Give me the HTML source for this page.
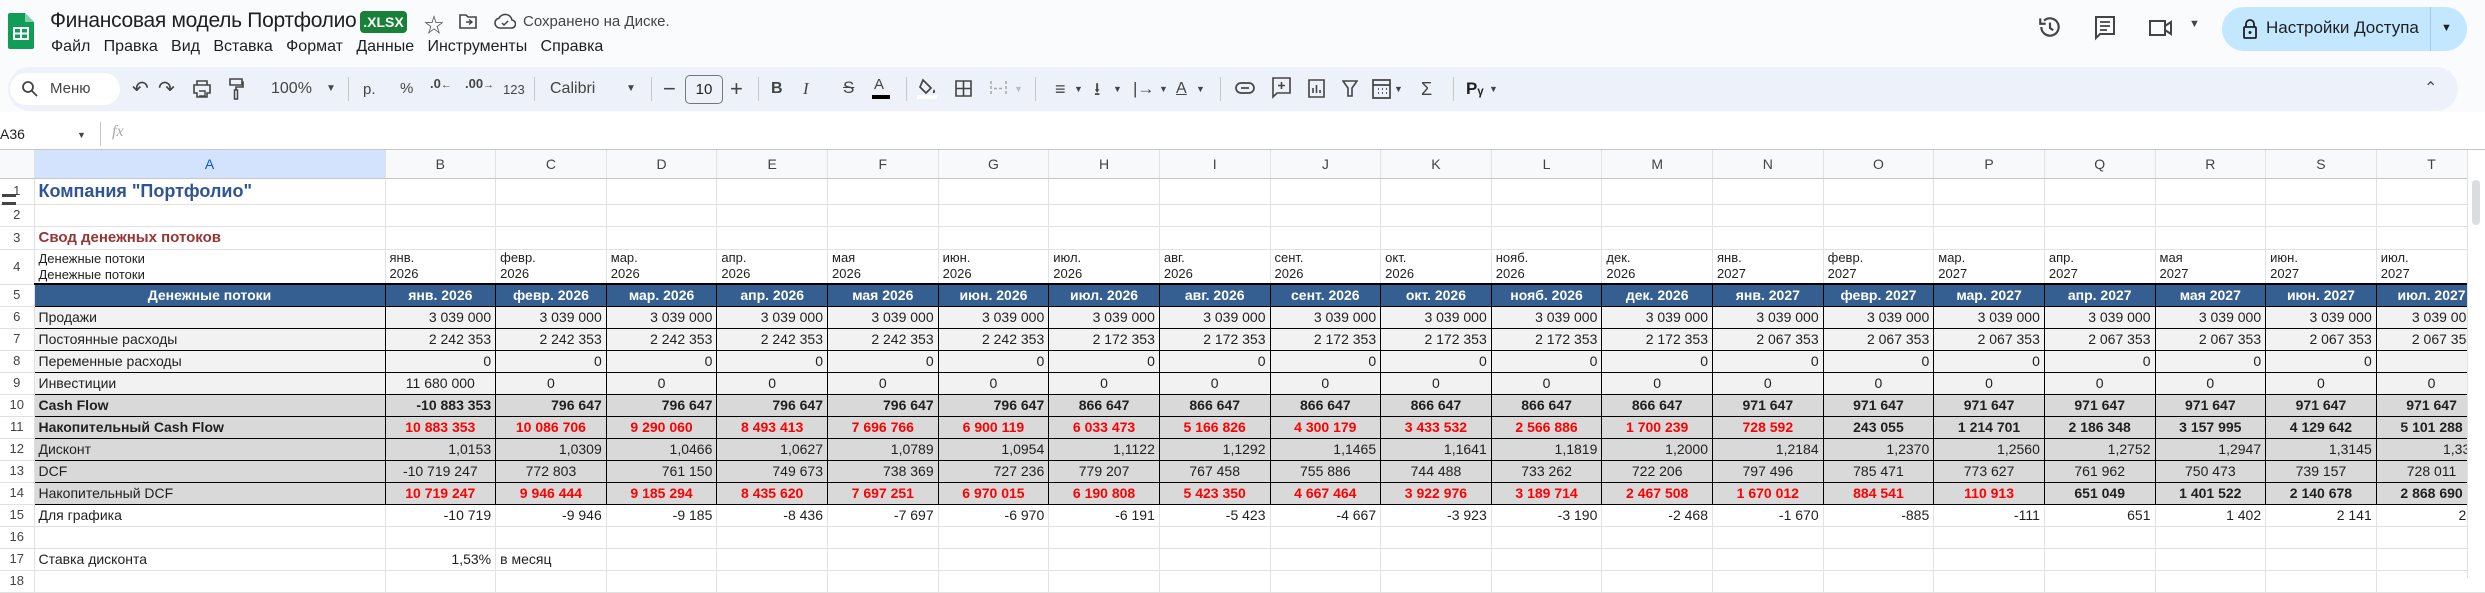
<!DOCTYPE html>
<html><head><meta charset="utf-8"><style>
*{box-sizing:border-box;margin:0;padding:0}
body{width:2485px;height:578px;overflow:hidden;background:#f9fbfd;font-family:"Liberation Sans","Noto Sans CJK SC",sans-serif;color:#1f1f1f;position:relative}
.a{position:absolute;white-space:nowrap}
.ic{position:absolute;color:#444;font-size:20px;line-height:20px;top:79px}
.sep{position:absolute;top:77px;width:1px;height:24px;background:#c7c7c7}
table{position:absolute;left:0;top:150px;border-collapse:collapse;table-layout:fixed;background:#fff;font-size:14px}
td{border-right:1px solid #e1e1e1;border-bottom:1px solid #e1e1e1;height:22px;padding:0 4px;white-space:nowrap;overflow:hidden;line-height:20px}
tr.h td{background:#f8f9fa;text-align:center;color:#444;height:28px;font-size:14px;border-bottom:1px solid #c4c7c5}
td.rh{text-align:center;color:#444;font-size:13px;padding:0;background:#fff}
.k{border:1px solid #000}
.r{text-align:right}.c{text-align:center}
.l1 td.k{background:#f2f2f2}
.l2 td.k{background:#d9d9d9}
.hd td.k{background:#355f91;color:#fff;font-weight:bold;text-align:center;border-top:2px solid #000}
.b{font-weight:bold}.red{color:#f00;font-weight:bold}
</style></head><body>
<!-- header -->
<svg class="a" style="left:8px;top:13px" width="26" height="36" viewBox="0 0 26 36"><path d="M2 0h15l9 9v25a2 2 0 0 1-2 2H2a2 2 0 0 1-2-2V2a2 2 0 0 1 2-2z" fill="#0f9d58"/><path d="M17 0v9h9z" fill="#87ceac"/><rect x="6" y="15" width="14" height="11" fill="none" stroke="#fff" stroke-width="2"/><path d="M6 20.5h14M13 15v11" stroke="#fff" stroke-width="2"/></svg>
<div class="a" style="left:50px;top:9px;font-size:21px;letter-spacing:-0.3px;color:#1f1f1f">Финансовая модель Портфолио</div>
<div class="a" style="left:360px;top:11px;width:47px;height:22px;background:#188038;color:#fff;border-radius:4px;font-size:14px;font-weight:bold;text-align:center;line-height:22px">.XLSX</div>
<div class="a" style="left:424px;top:9px;font-size:20px;color:#444">☆</div>
<svg class="a" style="left:459px;top:13px" width="18" height="16" viewBox="0 0 18 16"><path d="M1 2h6l2 2h8v11H1z" fill="none" stroke="#444" stroke-width="1.6"/><path d="M7 9h6M10 6.5l3 2.5-3 2.5" stroke="#444" stroke-width="1.4" fill="none"/></svg>
<svg class="a" style="left:494px;top:13px" width="22" height="16" viewBox="0 0 22 16"><path d="M6 15a5 5 0 0 1-1-9.9A7 7 0 0 1 18 7a4 4 0 0 1-1 8z" fill="none" stroke="#444" stroke-width="1.6"/><path d="M8 10l2 2 4-4" stroke="#444" stroke-width="1.5" fill="none"/></svg>
<div class="a" style="left:523px;top:13px;font-size:15px;color:#444">Сохранено на Диске.</div>
<div class="a" style="left:51px;top:38px;font-size:16px;color:#1f1f1f;word-spacing:0">Файл&nbsp;&nbsp;&nbsp;Правка&nbsp;&nbsp;&nbsp;Вид&nbsp;&nbsp;&nbsp;Вставка&nbsp;&nbsp;&nbsp;Формат&nbsp;&nbsp;&nbsp;Данные&nbsp;&nbsp;&nbsp;Инструменты&nbsp;&nbsp;&nbsp;Справка</div>
<svg class="a" style="left:2037px;top:14px" width="26" height="26" viewBox="0 0 24 24"><path d="M4 12a8 8 0 1 0 2.5-5.8" fill="none" stroke="#444" stroke-width="2"/><path d="M3 4v5h5" fill="none" stroke="#444" stroke-width="2"/><path d="M12 8v5l3 2" fill="none" stroke="#444" stroke-width="2"/></svg>
<svg class="a" style="left:2093px;top:15px" width="24" height="26" viewBox="0 0 24 26"><path d="M3 2h18v17H7l-4 4z" fill="none" stroke="#444" stroke-width="2"/><path d="M7 7h10M7 11h10M7 15h7" stroke="#444" stroke-width="1.8"/></svg>
<svg class="a" style="left:2148px;top:17px" width="28" height="22" viewBox="0 0 28 22"><path d="M2 4h15v14H2z" fill="none" stroke="#444" stroke-width="2"/><path d="M17 9l6-4v12l-6-4" fill="none" stroke="#444" stroke-width="2"/></svg>
<div class="a" style="left:2189px;top:18px;font-size:11px;color:#444">▼</div>
<div class="a" style="left:2222px;top:7px;width:245px;height:44px;background:#c2e7ff;border-radius:22px"></div>
<div class="a" style="left:2430px;top:7px;width:1px;height:44px;background:#9ccbec"></div>
<svg class="a" style="left:2242px;top:19px" width="16" height="20" viewBox="0 0 16 20"><path d="M4 8V5a4 4 0 0 1 8 0v3" fill="none" stroke="#1f1f1f" stroke-width="1.8"/><rect x="2" y="8" width="12" height="11" rx="1" fill="none" stroke="#1f1f1f" stroke-width="1.8"/><circle cx="8" cy="13.5" r="1.5" fill="#1f1f1f"/></svg>
<div class="a" style="left:2266px;top:18px;font-size:17px;color:#1f1f1f">Настройки Доступа</div>
<div class="a" style="left:2441px;top:22px;font-size:11px;color:#1f1f1f">▼</div>
<!-- toolbar -->
<div class="a" style="left:8px;top:67px;width:2450px;height:44px;background:#edf2fa;border-radius:22px"></div>
<div class="a" style="left:10px;top:73px;width:110px;height:32px;background:#fff;border-radius:16px"></div>
<svg class="a" style="left:21px;top:80px" width="18" height="18" viewBox="0 0 18 18"><circle cx="7" cy="7" r="5" fill="none" stroke="#444" stroke-width="1.8"/><path d="M11 11l5 5" stroke="#444" stroke-width="1.8"/></svg>
<div class="a" style="left:50px;top:80px;font-size:15px;color:#444">Меню</div>
<div class="ic" style="left:132px">↶</div><div class="ic" style="left:158px">↷</div>
<svg class="a" style="left:192px;top:80px" width="20" height="18" viewBox="0 0 20 18"><path d="M5 1h10v4H5zM2 5h16v8h-3v4H5v-4H2z" fill="none" stroke="#444" stroke-width="1.6"/><path d="M7 11h6v5H7" fill="none" stroke="#444" stroke-width="1.4"/></svg>
<svg class="a" style="left:228px;top:78px" width="16" height="22" viewBox="0 0 16 22"><path d="M2 1h12v6H2zM14 4h1v5H8v3" fill="none" stroke="#444" stroke-width="1.6"/><rect x="6.5" y="12" width="3" height="9" fill="none" stroke="#444" stroke-width="1.5"/></svg>
<div class="a" style="left:271px;top:80px;font-size:16px;color:#444">100%</div>
<div class="a" style="left:326px;top:83px;font-size:10px;color:#444">▼</div>
<div class="sep" style="left:348px"></div>
<div class="a" style="left:363px;top:81px;font-size:15px;color:#444">р.</div>
<div class="a" style="left:400px;top:80px;font-size:15px;color:#444">%</div>
<div class="a" style="left:430px;top:76px;font-size:13px;color:#444;font-weight:bold">.0<span style="font-size:11px">←</span></div>
<div class="a" style="left:465px;top:76px;font-size:13px;color:#444;font-weight:bold">.00<span style="font-size:11px">→</span></div>
<div class="a" style="left:503px;top:82px;font-size:13px;color:#444">123</div>
<div class="sep" style="left:534px"></div>
<div class="a" style="left:550px;top:80px;font-size:16px;color:#444">Calibri</div>
<div class="a" style="left:626px;top:83px;font-size:10px;color:#444">▼</div>
<div class="sep" style="left:651px"></div>
<div class="a" style="left:663px;top:76px;font-size:22px;color:#444">−</div>
<div class="a" style="left:685px;top:75px;width:38px;height:29px;border:1px solid #747775;border-radius:5px;font-size:15px;text-align:center;line-height:27px;color:#1f1f1f">10</div>
<div class="a" style="left:730px;top:76px;font-size:22px;color:#444">+</div>
<div class="sep" style="left:758px"></div>
<div class="a" style="left:771px;top:80px;font-size:16px;font-weight:bold;color:#444">B</div>
<div class="a" style="left:803px;top:79px;font-size:17px;font-style:italic;font-family:'Liberation Serif',serif;color:#444">I</div>
<div class="a" style="left:843px;top:78px;font-size:17px;color:#444;text-decoration:line-through">S</div>
<div class="a" style="left:874px;top:76px;font-size:15px;color:#444">A</div>
<div class="a" style="left:872px;top:95px;width:18px;height:4px;background:#000"></div>
<div class="sep" style="left:906px"></div>
<svg class="a" style="left:918px;top:77px" width="20" height="20" viewBox="0 0 20 20"><path d="M5 3l8 8-5 5-6-6z" fill="none" stroke="#444" stroke-width="1.7"/><path d="M16 12c1 2 2 3 0 4s-1-2 0-4z" fill="#444"/></svg>
<div class="a" style="left:917px;top:95px;width:20px;height:4px;background:#fff"></div>
<svg class="a" style="left:955px;top:80px" width="17" height="17" viewBox="0 0 17 17"><path d="M1 1h15v15H1zM8.5 1v15M1 8.5h15" fill="none" stroke="#444" stroke-width="1.6"/></svg>
<svg class="a" style="left:990px;top:80px" width="17" height="17" viewBox="0 0 17 17"><path d="M1 1v15M16 1v15M4 8.5h9" fill="none" stroke="#aaa" stroke-width="1.6" stroke-dasharray="3 2"/></svg>
<div class="a" style="left:1014px;top:84px;font-size:9px;color:#bbb">▼</div>
<div class="sep" style="left:1035px"></div>
<div class="ic" style="left:1055px;font-size:18px">≡</div><div class="a" style="left:1074px;top:84px;font-size:9px;color:#444">▼</div>
<div class="ic" style="left:1094px;font-size:18px">⭳</div><div class="a" style="left:1113px;top:84px;font-size:9px;color:#444">▼</div>
<div class="ic" style="left:1133px;font-size:17px">|→</div><div class="a" style="left:1159px;top:84px;font-size:9px;color:#444">▼</div>
<div class="ic" style="left:1176px;font-size:16px;text-decoration:underline">A</div><div class="a" style="left:1196px;top:84px;font-size:9px;color:#444">▼</div>
<div class="sep" style="left:1220px"></div>
<svg class="a" style="left:1235px;top:82px" width="20" height="12" viewBox="0 0 20 12"><rect x="1" y="1" width="18" height="10" rx="5" fill="none" stroke="#444" stroke-width="1.7"/><path d="M6 6h8" stroke="#444" stroke-width="1.7"/></svg>
<svg class="a" style="left:1272px;top:77px" width="19" height="22" viewBox="0 0 19 22"><path d="M1 1h17v15H5l-4 4z" fill="none" stroke="#444" stroke-width="1.6"/><path d="M9.5 5v7M6 8.5h7" stroke="#444" stroke-width="1.6"/></svg>
<svg class="a" style="left:1308px;top:79px" width="17" height="19" viewBox="0 0 17 19"><path d="M1 1h15v17H1z" fill="none" stroke="#444" stroke-width="1.6"/><path d="M5 14V9M8.5 14V6M12 14v-3" stroke="#444" stroke-width="1.6"/></svg>
<svg class="a" style="left:1342px;top:80px" width="16" height="17" viewBox="0 0 16 17"><path d="M1 1h14l-5 7v8H6V8z" fill="none" stroke="#444" stroke-width="1.6"/></svg>
<svg class="a" style="left:1372px;top:77px" width="19" height="22" viewBox="0 0 19 22"><path d="M1 3h17v18H1zM1 8h17M6 12h1M10 12h1M14 12h1M6 16h1M10 16h1M14 16h1" fill="none" stroke="#444" stroke-width="1.7"/></svg>
<div class="a" style="left:1394px;top:84px;font-size:9px;color:#444">▼</div>
<div class="ic" style="left:1421px;font-size:18px">Σ</div>
<div class="sep" style="left:1453px"></div>
<div class="a" style="left:1466px;top:79px;font-size:17px;font-weight:bold;color:#1f1f1f">Pᵧ</div>
<div class="a" style="left:1489px;top:84px;font-size:9px;color:#444">▼</div>
<div class="a" style="left:2424px;top:78px;font-size:16px;color:#444">⌃</div>
<!-- formula bar -->
<div class="a" style="left:0;top:112px;width:2485px;height:38px;background:#fff"></div>
<div class="a" style="left:0;top:126px;font-size:14px;color:#1f1f1f">A36</div>
<div class="a" style="left:77px;top:130px;font-size:9px;color:#444">▼</div>
<div class="a" style="left:100px;top:122px;width:1px;height:24px;background:#c7c7c7"></div>
<div class="a" style="left:112px;top:123px;font-size:16px;font-style:italic;font-family:'Liberation Serif',serif;color:#aaa">fx</div>
<div class="a" style="left:0;top:149px;width:2485px;height:1px;background:#c4c7c5"></div>
<!-- grid -->
<table style="width:2467px">
<colgroup><col style="width:34px"><col style="width:351px"><col span="19" style="width:110.63px"></colgroup>
<tr class="h"><td style="background:#f8f9fa"></td><td style="background:#d3e3fd;color:#0b57d0">A</td><td>B</td><td>C</td><td>D</td><td>E</td><td>F</td><td>G</td><td>H</td><td>I</td><td>J</td><td>K</td><td>L</td><td>M</td><td>N</td><td>O</td><td>P</td><td>Q</td><td>R</td><td>S</td><td>T</td></tr>
<tr style="height:26px"><td class="rh">1</td><td style="font-size:18px;font-weight:bold;color:#2f5496">Компания "Портфолио"</td><td></td><td></td><td></td><td></td><td></td><td></td><td></td><td></td><td></td><td></td><td></td><td></td><td></td><td></td><td></td><td></td><td></td><td></td><td></td></tr>
<tr style="height:21px"><td class="rh">2</td><td></td><td></td><td></td><td></td><td></td><td></td><td></td><td></td><td></td><td></td><td></td><td></td><td></td><td></td><td></td><td></td><td></td><td></td><td></td><td></td></tr>
<tr style="height:23px"><td class="rh">3</td><td style="font-size:15px;font-weight:bold;color:#943634">Свод денежных потоков</td><td></td><td></td><td></td><td></td><td></td><td></td><td></td><td></td><td></td><td></td><td></td><td></td><td></td><td></td><td></td><td></td><td></td><td></td><td></td></tr>
<tr style="height:35px;font-size:13px"><td class="rh">4</td><td style="line-height:16px;font-size:13px;padding-top:1px">Денежные потоки<br>Денежные потоки</td>
<td style="line-height:16px;font-size:13px">янв.<br>2026</td><td style="line-height:16px;font-size:13px">февр.<br>2026</td><td style="line-height:16px;font-size:13px">мар.<br>2026</td><td style="line-height:16px;font-size:13px">апр.<br>2026</td><td style="line-height:16px;font-size:13px">мая<br>2026</td><td style="line-height:16px;font-size:13px">июн.<br>2026</td><td style="line-height:16px;font-size:13px">июл.<br>2026</td><td style="line-height:16px;font-size:13px">авг.<br>2026</td><td style="line-height:16px;font-size:13px">сент.<br>2026</td><td style="line-height:16px;font-size:13px">окт.<br>2026</td><td style="line-height:16px;font-size:13px">нояб.<br>2026</td><td style="line-height:16px;font-size:13px">дек.<br>2026</td><td style="line-height:16px;font-size:13px">янв.<br>2027</td><td style="line-height:16px;font-size:13px">февр.<br>2027</td><td style="line-height:16px;font-size:13px">мар.<br>2027</td><td style="line-height:16px;font-size:13px">апр.<br>2027</td><td style="line-height:16px;font-size:13px">мая<br>2027</td><td style="line-height:16px;font-size:13px">июн.<br>2027</td><td style="line-height:16px;font-size:13px">июл.<br>2027</td></tr>
<tr class="hd"><td class="rh">5</td><td class="k">Денежные потоки</td><td class="k">янв. 2026</td><td class="k">февр. 2026</td><td class="k">мар. 2026</td><td class="k">апр. 2026</td><td class="k">мая 2026</td><td class="k">июн. 2026</td><td class="k">июл. 2026</td><td class="k">авг. 2026</td><td class="k">сент. 2026</td><td class="k">окт. 2026</td><td class="k">нояб. 2026</td><td class="k">дек. 2026</td><td class="k">янв. 2027</td><td class="k">февр. 2027</td><td class="k">мар. 2027</td><td class="k">апр. 2027</td><td class="k">мая 2027</td><td class="k">июн. 2027</td><td class="k">июл. 2027</td></tr>
<tr class="l1"><td class="rh">6</td><td class="k">Продажи</td><td class="k r">3 039 000</td><td class="k r">3 039 000</td><td class="k r">3 039 000</td><td class="k r">3 039 000</td><td class="k r">3 039 000</td><td class="k r">3 039 000</td><td class="k r">3 039 000</td><td class="k r">3 039 000</td><td class="k r">3 039 000</td><td class="k r">3 039 000</td><td class="k r">3 039 000</td><td class="k r">3 039 000</td><td class="k r">3 039 000</td><td class="k r">3 039 000</td><td class="k r">3 039 000</td><td class="k r">3 039 000</td><td class="k r">3 039 000</td><td class="k r">3 039 000</td><td class="k">&nbsp;&nbsp;&nbsp;&nbsp;&nbsp;&nbsp;&nbsp;&nbsp;3 039 000</td></tr>
<tr class="l1"><td class="rh">7</td><td class="k">Постоянные расходы</td><td class="k r">2 242 353</td><td class="k r">2 242 353</td><td class="k r">2 242 353</td><td class="k r">2 242 353</td><td class="k r">2 242 353</td><td class="k r">2 242 353</td><td class="k r">2 172 353</td><td class="k r">2 172 353</td><td class="k r">2 172 353</td><td class="k r">2 172 353</td><td class="k r">2 172 353</td><td class="k r">2 172 353</td><td class="k r">2 067 353</td><td class="k r">2 067 353</td><td class="k r">2 067 353</td><td class="k r">2 067 353</td><td class="k r">2 067 353</td><td class="k r">2 067 353</td><td class="k">&nbsp;&nbsp;&nbsp;&nbsp;&nbsp;&nbsp;&nbsp;&nbsp;2 067 353</td></tr>
<tr class="l1"><td class="rh">8</td><td class="k">Переменные расходы</td><td class="k r">0</td><td class="k r">0</td><td class="k r">0</td><td class="k r">0</td><td class="k r">0</td><td class="k r">0</td><td class="k r">0</td><td class="k r">0</td><td class="k r">0</td><td class="k r">0</td><td class="k r">0</td><td class="k r">0</td><td class="k r">0</td><td class="k r">0</td><td class="k r">0</td><td class="k r">0</td><td class="k r">0</td><td class="k r">0</td><td class="k r">0</td></tr>
<tr class="l1"><td class="rh">9</td><td class="k">Инвестиции</td><td class="k c">11 680 000</td><td class="k c">0</td><td class="k c">0</td><td class="k c">0</td><td class="k c">0</td><td class="k c">0</td><td class="k c">0</td><td class="k c">0</td><td class="k c">0</td><td class="k c">0</td><td class="k c">0</td><td class="k c">0</td><td class="k c">0</td><td class="k c">0</td><td class="k c">0</td><td class="k c">0</td><td class="k c">0</td><td class="k c">0</td><td class="k c">0</td></tr>
<tr class="l2 b"><td class="rh" style="font-weight:normal">10</td><td class="k">Cash Flow</td><td class="k r">-10 883 353</td><td class="k r">796 647</td><td class="k r">796 647</td><td class="k r">796 647</td><td class="k r">796 647</td><td class="k r">796 647</td><td class="k c">866 647</td><td class="k c">866 647</td><td class="k c">866 647</td><td class="k c">866 647</td><td class="k c">866 647</td><td class="k c">866 647</td><td class="k c">971 647</td><td class="k c">971 647</td><td class="k c">971 647</td><td class="k c">971 647</td><td class="k c">971 647</td><td class="k c">971 647</td><td class="k c">971 647</td></tr>
<tr class="l2 b"><td class="rh" style="font-weight:normal">11</td><td class="k">Накопительный Cash Flow</td><td class="k c red">10 883 353</td><td class="k c red">10 086 706</td><td class="k c red">9 290 060</td><td class="k c red">8 493 413</td><td class="k c red">7 696 766</td><td class="k c red">6 900 119</td><td class="k c red">6 033 473</td><td class="k c red">5 166 826</td><td class="k c red">4 300 179</td><td class="k c red">3 433 532</td><td class="k c red">2 566 886</td><td class="k c red">1 700 239</td><td class="k c red">728 592</td><td class="k c">243 055</td><td class="k c">1 214 701</td><td class="k c">2 186 348</td><td class="k c">3 157 995</td><td class="k c">4 129 642</td><td class="k c">5 101 288</td></tr>
<tr class="l2"><td class="rh">12</td><td class="k">Дисконт</td><td class="k r">1,0153</td><td class="k r">1,0309</td><td class="k r">1,0466</td><td class="k r">1,0627</td><td class="k r">1,0789</td><td class="k r">1,0954</td><td class="k r">1,1122</td><td class="k r">1,1292</td><td class="k r">1,1465</td><td class="k r">1,1641</td><td class="k r">1,1819</td><td class="k r">1,2000</td><td class="k r">1,2184</td><td class="k r">1,2370</td><td class="k r">1,2560</td><td class="k r">1,2752</td><td class="k r">1,2947</td><td class="k r">1,3145</td><td class="k">&nbsp;&nbsp;&nbsp;&nbsp;&nbsp;&nbsp;&nbsp;&nbsp;&nbsp;&nbsp;&nbsp;&nbsp;&nbsp;&nbsp;&nbsp;&nbsp;1,3346</td></tr>
<tr class="l2"><td class="rh">13</td><td class="k">DCF</td><td class="k c">-10 719 247</td><td class="k c">772 803</td><td class="k r">761 150</td><td class="k r">749 673</td><td class="k r">738 369</td><td class="k r">727 236</td><td class="k c">779 207</td><td class="k c">767 458</td><td class="k c">755 886</td><td class="k c">744 488</td><td class="k c">733 262</td><td class="k c">722 206</td><td class="k c">797 496</td><td class="k c">785 471</td><td class="k c">773 627</td><td class="k c">761 962</td><td class="k c">750 473</td><td class="k c">739 157</td><td class="k c">728 011</td></tr>
<tr class="l2 b"><td class="rh" style="font-weight:normal">14</td><td class="k" style="font-weight:normal">Накопительный DCF</td><td class="k c red">10 719 247</td><td class="k c red">9 946 444</td><td class="k c red">9 185 294</td><td class="k c red">8 435 620</td><td class="k c red">7 697 251</td><td class="k c red">6 970 015</td><td class="k c red">6 190 808</td><td class="k c red">5 423 350</td><td class="k c red">4 667 464</td><td class="k c red">3 922 976</td><td class="k c red">3 189 714</td><td class="k c red">2 467 508</td><td class="k c red">1 670 012</td><td class="k c red">884 541</td><td class="k c red">110 913</td><td class="k c">651 049</td><td class="k c">1 401 522</td><td class="k c">2 140 678</td><td class="k c">2 868 690</td></tr>
<tr><td class="rh">15</td><td>Для графика</td><td class="r">-10 719</td><td class="r">-9 946</td><td class="r">-9 185</td><td class="r">-8 436</td><td class="r">-7 697</td><td class="r">-6 970</td><td class="r">-6 191</td><td class="r">-5 423</td><td class="r">-4 667</td><td class="r">-3 923</td><td class="r">-3 190</td><td class="r">-2 468</td><td class="r">-1 670</td><td class="r">-885</td><td class="r">-111</td><td class="r">651</td><td class="r">1 402</td><td class="r">2 141</td><td>&nbsp;&nbsp;&nbsp;&nbsp;&nbsp;&nbsp;&nbsp;&nbsp;&nbsp;&nbsp;&nbsp;&nbsp;&nbsp;&nbsp;&nbsp;&nbsp;&nbsp;&nbsp;&nbsp;&nbsp;2 869</td></tr>
<tr><td class="rh">16</td><td></td><td></td><td></td><td></td><td></td><td></td><td></td><td></td><td></td><td></td><td></td><td></td><td></td><td></td><td></td><td></td><td></td><td></td><td></td><td></td></tr>
<tr><td class="rh">17</td><td>Ставка дисконта</td><td class="r">1,53%</td><td>в месяц</td><td></td><td></td><td></td><td></td><td></td><td></td><td></td><td></td><td></td><td></td><td></td><td></td><td></td><td></td><td></td><td></td><td></td></tr>
<tr><td class="rh">18</td><td></td><td></td><td></td><td></td><td></td><td></td><td></td><td></td><td></td><td></td><td></td><td></td><td></td><td></td><td></td><td></td><td></td><td></td><td></td><td></td></tr>
</table>
<div class="a" style="left:2px;top:194px;width:14px;height:3px;background:#444"></div>
<div class="a" style="left:2px;top:202px;width:14px;height:3px;background:#444"></div>
<svg class="a" style="left:375px;top:458px" width="9" height="9"><path d="M0 0h9l-9 0 9 9z" fill="#f4b400"/></svg>
<div class="a" style="left:2467px;top:150px;width:18px;height:428px;background:#fff;border-left:1px solid #e1e1e1"></div>
<div class="a" style="left:2472px;top:180px;width:8px;height:45px;background:#dadce0;border-radius:4px"></div>
</body></html>
